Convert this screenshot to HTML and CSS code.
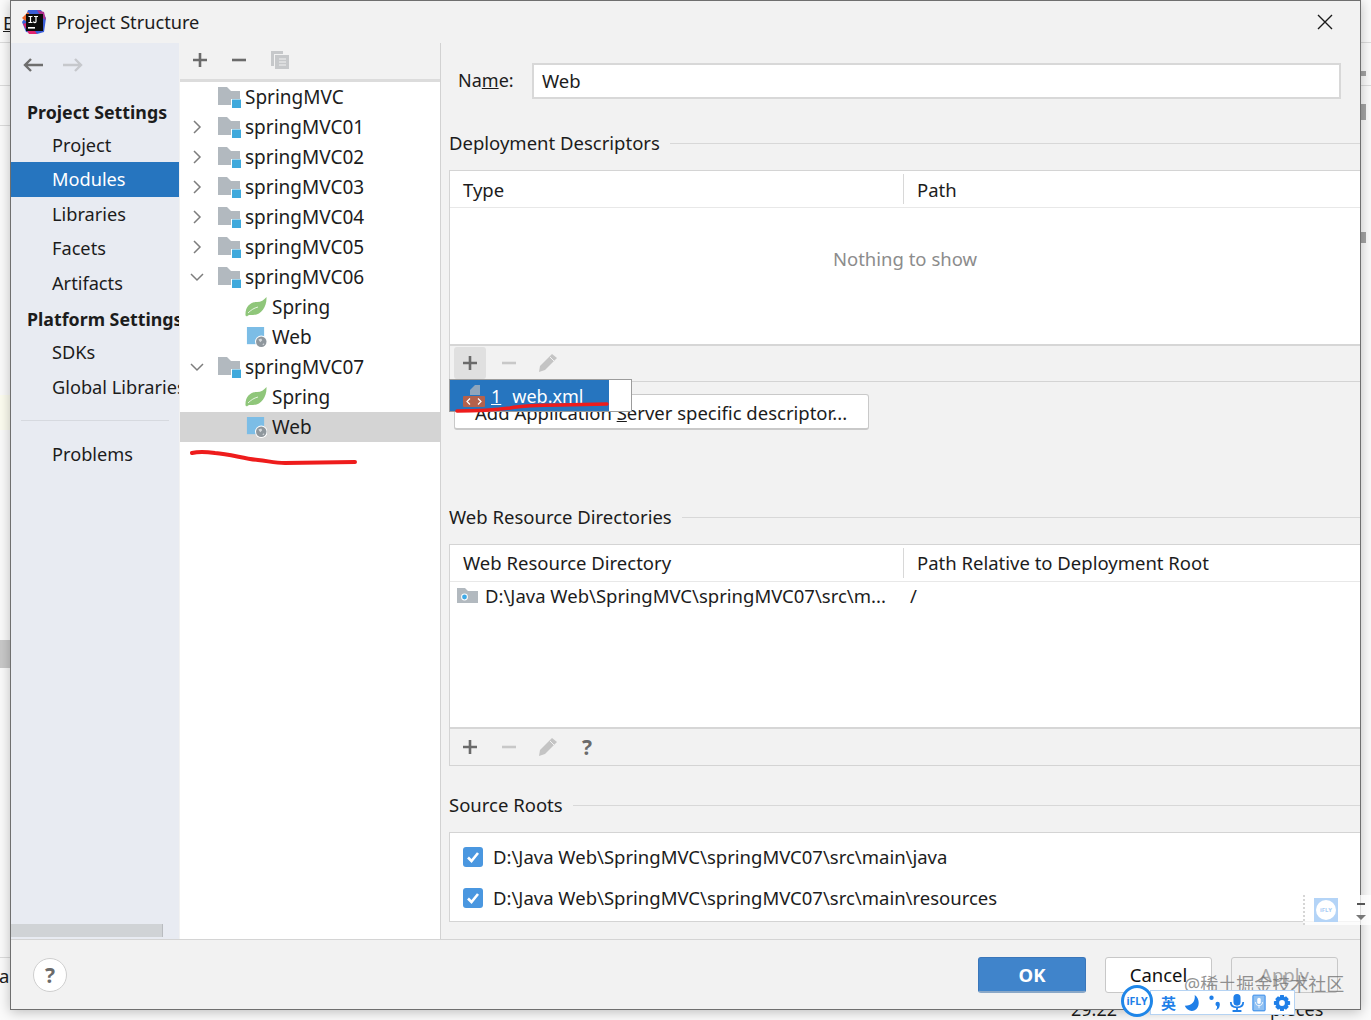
FILE: index.html
```html
<!DOCTYPE html>
<html lang="zh-CN">
<head>
  <meta charset="UTF-8">
  <title>Project Structure</title>
  <link rel="stylesheet" href="styles.css">
</head>
<body>
<svg class="defs" width="0" height="0">
  <symbol id="i-module" viewBox="0 0 24 21">
    <path d="M0 0h9l4 4h9v14H0z" fill="#b2b9bf"/>
    <rect x="13" y="12" width="10" height="9" fill="#fff"/>
    <rect x="14" y="12.5" width="9" height="8.5" fill="#3fa9dc"/>
  </symbol>
  <symbol id="i-spring" viewBox="0 0 22 20">
    <path d="M21.500 0C22 10 16 18 8 18 5 18 3.500 17.500 2 19.500L0.500 18.500C0 10 5 5 12 5 16 5 19 3 21.500 0z" fill="#8fc67a"/>
    <path d="M3 16C6 13 9 11 13 10" fill="none" stroke="#fff" stroke-width="0.800"/>
  </symbol>
  <symbol id="i-web" viewBox="0 0 23 22">
    <rect x="2" y="0" width="18" height="18" fill="#7cbde6"/>
    <circle cx="17" cy="15.500" r="6.500" fill="#fff"/>
    <circle cx="17" cy="15.500" r="5.500" fill="#8f979d"/>
    <path d="M14 13l3-1 1 2-2 2zM18 18l2-1v2z" fill="#d5d9dc"/>
  </symbol>
  <symbol id="i-plus" viewBox="0 0 16 16">
    <path d="M8 1v14M1 8h14" fill="none" stroke="currentColor" stroke-width="2.6"/>
  </symbol>
  <symbol id="i-minus" viewBox="0 0 16 16">
    <path d="M1 8h14" fill="none" stroke="currentColor" stroke-width="2.6"/>
  </symbol>
  <symbol id="i-pencil" viewBox="0 0 20 20">
    <path d="M14 1l5 4L7 17l-6 2 1-6z" fill="#c4c4c4"/>
    <path d="M12 4l4 4" stroke="#f2f2f2" stroke-width="1"/>
  </symbol>
  <symbol id="i-check" viewBox="0 0 20 20">
    <rect width="20" height="20" rx="3" fill="#4a97e0"/>
    <path d="M5 10.5l3.5 3.5L15 6" fill="none" stroke="#fff" stroke-width="2.6"/>
  </symbol>
  <symbol id="i-right" viewBox="0 0 10 14">
    <path d="M2 1l6 6-6 6" fill="none" stroke="#7d7d7d" stroke-width="1.5"/>
  </symbol>
  <symbol id="i-down" viewBox="0 0 14 10">
    <path d="M1 2l6 6 6-6" fill="none" stroke="#7d7d7d" stroke-width="1.5"/>
  </symbol>
</svg>

<div class="desktop">
  <div class="behind-e">E</div>
  <div class="behind-a">a</div>
  <div class="behind-block"></div>
  <div class="behind-yellow"></div>
  <div class="behind-line l1"></div>
  <div class="behind-line l2"></div>
  <div class="behind-line l3"></div>
  <div class="behind-line l4"></div>
  <div class="behind-mark m1"></div>
  <div class="behind-mark m2"></div>
  <div class="behind-mark m3"></div>
  <div class="behind-bottom b1">29.22</div>
  <div class="behind-bottom b2">pieces</div>

  <div class="dialog">
    <div class="titlebar">
      <svg class="app-logo" width="26" height="26" viewBox="0 0 26 26">
        <path d="M7 1l13 0 5 8-2 14-7 2-11-2-4-10 3-4z" fill="#3b5fd9"/>
        <path d="M1 9l6-6 4 6-4 5z" fill="#f0682a"/>
        <path d="M2 15l6 10 8 0-8-12z" fill="#e0246f"/>
        <path d="M16 1l7 2 2 8-5-3z" fill="#b0328f"/>
        <rect x="5" y="5" width="17" height="17" fill="#0c0c0c"/>
        <rect x="7" y="18" width="7" height="1.6" fill="#fff"/>
        <path d="M7.5 7.5h4M9.5 7.5v6M7.5 13.5h4M13 7.5h4M15 7.5v5c0 1.5-2 1.5-2.600 0" fill="none" stroke="#fff" stroke-width="1.200"/>
      </svg>
      <span class="title">Project Structure</span>
      <svg class="close" width="16" height="16" viewBox="0 0 16 16">
        <path d="M1 1l14 14M15 1L1 15" stroke="#1a1a1a" stroke-width="1.400"/>
      </svg>
    </div>

    <div class="main">
      <aside class="sidebar">
        <div class="nav-arrows">
          <svg width="22" height="16" viewBox="0 0 22 16"><path d="M21 8H3M9 2L3 8l6 6" fill="none" stroke="#6e6e6e" stroke-width="2.400"/></svg>
          <svg width="22" height="16" viewBox="0 0 22 16"><path d="M1 8h18M13 2l6 6-6 6" fill="none" stroke="#c6c8cc" stroke-width="2.400"/></svg>
        </div>
        <div class="nav-head">Project Settings</div>
        <div class="nav-item">Project</div>
        <div class="nav-item active">Modules</div>
        <div class="nav-item">Libraries</div>
        <div class="nav-item">Facets</div>
        <div class="nav-item">Artifacts</div>
        <div class="nav-head second">Platform Settings</div>
        <div class="nav-item">SDKs</div>
        <div class="nav-item">Global Libraries</div>
        <div class="nav-sep"></div>
        <div class="nav-item">Problems</div>
        <div class="side-scroll"></div>
      </aside>

      <section class="tree-panel">
        <div class="tree-tools">
          <svg class="ic-dark" width="16" height="16"><use href="#i-plus"/></svg>
          <svg class="ic-dark" width="16" height="16"><use href="#i-minus"/></svg>
          <svg width="20" height="20" viewBox="0 0 20 20"><path d="M1 1h12v3H4v12H1z" fill="#c6c8ca"/><path d="M5 5h14v14H5z" fill="#c6c8ca"/><path d="M9 9h7M9 12h7M9 15h7" stroke="#f2f2f2" stroke-width="1.200"/></svg>
        </div>
        <div class="tree">
          <div class="tree-row"><span class="arrow"></span><svg class="mod" width="24" height="21"><use href="#i-module"/></svg>SpringMVC</div>
          <div class="tree-row"><span class="arrow"><svg width="10" height="14"><use href="#i-right"/></svg></span><svg class="mod" width="24" height="21"><use href="#i-module"/></svg>springMVC01</div>
          <div class="tree-row"><span class="arrow"><svg width="10" height="14"><use href="#i-right"/></svg></span><svg class="mod" width="24" height="21"><use href="#i-module"/></svg>springMVC02</div>
          <div class="tree-row"><span class="arrow"><svg width="10" height="14"><use href="#i-right"/></svg></span><svg class="mod" width="24" height="21"><use href="#i-module"/></svg>springMVC03</div>
          <div class="tree-row"><span class="arrow"><svg width="10" height="14"><use href="#i-right"/></svg></span><svg class="mod" width="24" height="21"><use href="#i-module"/></svg>springMVC04</div>
          <div class="tree-row"><span class="arrow"><svg width="10" height="14"><use href="#i-right"/></svg></span><svg class="mod" width="24" height="21"><use href="#i-module"/></svg>springMVC05</div>
          <div class="tree-row"><span class="arrow"><svg width="14" height="10"><use href="#i-down"/></svg></span><svg class="mod" width="24" height="21"><use href="#i-module"/></svg>springMVC06</div>
          <div class="tree-row child"><svg class="leaf" width="22" height="20"><use href="#i-spring"/></svg>Spring</div>
          <div class="tree-row child"><svg class="leaf" width="22" height="21"><use href="#i-web"/></svg>Web</div>
          <div class="tree-row"><span class="arrow"><svg width="14" height="10"><use href="#i-down"/></svg></span><svg class="mod" width="24" height="21"><use href="#i-module"/></svg>springMVC07</div>
          <div class="tree-row child"><svg class="leaf" width="22" height="20"><use href="#i-spring"/></svg>Spring</div>
          <div class="tree-row child selected"><svg class="leaf" width="22" height="21"><use href="#i-web"/></svg>Web</div>
        </div>
      </section>

      <section class="content">
        <div class="name-row">
          <label>Na<u>m</u>e:</label>
          <div class="name-input">Web</div>
        </div>

        <div class="group-head first"><span>Deployment Descriptors</span></div>
        <div class="table">
          <div class="thead">
            <div class="th col-a">Type</div>
            <div class="th">Path</div>
          </div>
          <div class="tbody empty">Nothing to show</div>
          <div class="table-tools">
            <span class="tool hover"><svg class="ic-dark" width="16" height="16"><use href="#i-plus"/></svg></span>
            <span class="tool"><svg class="ic-light" width="16" height="16"><use href="#i-minus"/></svg></span>
            <span class="tool"><svg width="20" height="20"><use href="#i-pencil"/></svg></span>
          </div>
        </div>
        <button class="add-btn">Add Application <u>S</u>erver specific descriptor...</button>

        <div class="group-head second"><span>Web Resource Directories</span></div>
        <div class="table">
          <div class="thead short">
            <div class="th col-a">Web Resource Directory</div>
            <div class="th">Path Relative to Deployment Root</div>
          </div>
          <div class="tbody dirs">
            <div class="dir-row">
              <div class="cell col-a">
                <svg width="21" height="15" viewBox="0 0 21 15"><path d="M0 0h8l3 3h10v12H0z" fill="#b2b9bf"/><circle cx="7.500" cy="9" r="3.400" fill="#fff"/><circle cx="7.500" cy="9" r="2.400" fill="#3fa9e6"/></svg>
                <span>D:\Java Web\SpringMVC\springMVC07\src\m...</span>
              </div>
              <div class="cell slash">/</div>
            </div>
          </div>
          <div class="table-tools tall">
            <span class="tool"><svg class="ic-dark" width="16" height="16"><use href="#i-plus"/></svg></span>
            <span class="tool"><svg class="ic-light" width="16" height="16"><use href="#i-minus"/></svg></span>
            <span class="tool"><svg width="20" height="20"><use href="#i-pencil"/></svg></span>
            <span class="tool qmark">?</span>
          </div>
        </div>

        <div class="group-head third"><span>Source Roots</span></div>
        <div class="roots">
          <div class="root-row"><svg width="20" height="20"><use href="#i-check"/></svg>D:\Java Web\SpringMVC\springMVC07\src\main\java</div>
          <div class="root-row"><svg width="20" height="20"><use href="#i-check"/></svg>D:\Java Web\SpringMVC\springMVC07\src\main\resources</div>
        </div>
      </section>
    </div>

    <div class="footer">
      <div class="help">?</div>
      <div class="footer-btns">
        <button class="btn ok">OK</button>
        <button class="btn">Cancel</button>
        <button class="btn off">Apply</button>
      </div>
    </div>
  </div>

  <!-- popup over the add button -->
  <div class="popup">
    <div class="popup-sel">
      <svg width="22" height="22" viewBox="0 0 22 22">
        <path d="M7 5l5-5h5v10H7z" fill="#8fa6bd"/>
        <rect x="0" y="11" width="22" height="11" rx="1" fill="#b4614c"/>
        <path d="M7 13.500l-3 3 3 3M15 13.500l3 3-3 3" fill="none" stroke="#fff" stroke-width="1.200"/>
      </svg>
      <u>1</u><span>web.xml</span>
    </div>
  </div>

  <!-- hand drawn red marks -->
  <svg class="marks" width="1371" height="1020" viewBox="0 0 1371 1020">
    <path d="M192 453C200 451 208 452 215 453 230 454 245 459 258 460 268 461 275 463 285 463L355 462" fill="none" stroke="#ee1c1c" stroke-width="4" stroke-linecap="round"/>
    <path d="M457 411C475 411 495 410 510 408 525 405 540 405 560 405L607 404" fill="none" stroke="#ee1c1c" stroke-width="3.500" stroke-linecap="round"/>
  </svg>

  <!-- ime floating logo and toolbar -->
  <div class="fly-panel">
    <div class="fly-small"><span>iFLY</span></div>
    <svg class="fly-arrows" width="12" height="20" viewBox="0 0 12 20"><path d="M2 3h8" stroke="#555" stroke-width="2"/><path d="M1 14h10l-5 5z" fill="#777"/></svg>
  </div>

  <div class="watermark">@稀土掘金技术社区</div>
  <div class="ime">
    <div class="ime-logo">iFLY</div>
    <span class="ime-txt">英</span>
    <svg width="18" height="18" viewBox="0 0 20 20"><path d="M13 1C14 8 10 13 2 13 4 18 9 20 13 18 19 15 19 5 13 1z" fill="#1f7fe8"/></svg>
    <svg width="14" height="18" viewBox="0 0 16 20"><circle cx="4" cy="4" r="2.500" fill="#1f7fe8"/><circle cx="11" cy="11" r="2.500" fill="#1f7fe8"/><path d="M13 11c1 4-1 6-4 7 1-2 2-3 1-5z" fill="#1f7fe8"/></svg>
    <svg width="16" height="18" viewBox="0 0 18 20"><rect x="5" y="0" width="8" height="13" rx="4" fill="#1f7fe8"/><path d="M2 9c0 4 3 6 7 6s7-2 7-6" fill="none" stroke="#1f7fe8" stroke-width="2"/><path d="M9 15v3M4 19h10" stroke="#1f7fe8" stroke-width="2"/></svg>
    <svg width="14" height="18" viewBox="0 0 16 20"><rect x="1" y="1" width="14" height="18" rx="1" fill="#8fc0f2" stroke="#1f7fe8" stroke-width="1"/><rect x="6" y="4" width="4" height="7" rx="2" fill="#fff"/><path d="M4 9c0 3 2 4 4 4s4-1 4-4M8 13v3" fill="none" stroke="#fff" stroke-width="1"/></svg>
    <svg width="18" height="18" viewBox="0 0 20 20"><path d="M8 1h4l.5 2.500 2-1 3 3-1.200 2L19 8v4l-2.700.5 1.200 2-3 3-2-1.200L12 19H8l-.5-2.700-2 1.200-3-3 1.200-2L1 12V8l2.700-.5-1.200-2 3-3 2 1.200z" fill="#1f7fe8"/><circle cx="10" cy="10" r="3.200" fill="#fff"/></svg>
  </div>
</div>
</body>
</html>
```

FILE: styles.css
```css
* {
  box-sizing: border-box;
  margin: 0;
  padding: 0;
}

body {
  background: #fff;
  font-family: "Noto Sans", "Noto Sans CJK SC", sans-serif;
  font-size: 18.5px;
  color: #1c1c1c;
}

.defs {
  position: absolute;
}

.desktop {
  position: relative;
  width: 1371px;
  height: 1020px;
  overflow: hidden;
  background: #fbfbfb;
}

/* things of the window behind the dialog */
.behind-e,
.behind-a {
  position: absolute;
  left: 3px;
  top: 10px;
  text-decoration: underline;
}
.behind-a {
  left: -1px;
  top: 963px;
  text-decoration: none;
}
.behind-block {
  position: absolute;
  left: 0;
  top: 640px;
  width: 10px;
  height: 28px;
  background: #c9c9c9;
}
.behind-yellow {
  position: absolute;
  left: 0;
  top: 395px;
  width: 10px;
  height: 35px;
  background: #fdfdf0;
}
.behind-line {
  position: absolute;
  left: 0;
  height: 1px;
  width: 1371px;
  background: #dcdcdc;
}
.l1 { top: 42px; }
.l2 { top: 85px; }
.l3 { top: 125px; width: 10px; }
.l4 { top: 957px; width: 10px; }
.behind-mark {
  position: absolute;
  left: 1361px;
  width: 5px;
  background: #a4a4a4;
}
.m1 { top: 71px; height: 5px; }
.m2 { top: 104px; height: 16px; }
.m3 { top: 232px; height: 11px; }
.behind-bottom {
  position: absolute;
  top: 997px;
  font-size: 18px;
}
.b1 { left: 1071px; }
.b2 { left: 1270px; }

.dialog {
  position: relative;
  display: flex;
  flex-direction: column;
  margin-left: 10px;
  width: 1351px;
  height: 1010px;
  background: #f2f2f2;
  border: 1px solid #6f6f6f;
  box-shadow: 0 2px 12px rgba(0, 0, 0, 0.25);
  overflow: hidden;
}

.titlebar {
  flex: none;
  display: flex;
  align-items: center;
  height: 42px;
  padding-left: 10px;
}
.app-logo {
  margin-right: 9px;
}
.title {
  font-size: 18.2px;
}
.close {
  margin-left: auto;
  margin-right: 27px;
}

.main {
  flex: 1;
  display: flex;
  min-height: 0;
}

.sidebar {
  position: relative;
  flex: none;
  width: 168px;
  background: #e8ebf2;
  white-space: nowrap;
  overflow: hidden;
  font-size: 18.2px;
}
.nav-arrows {
  display: flex;
  gap: 18px;
  height: 51.500px;
  padding: 14px 0 0 11px;
}
.nav-head {
  padding-left: 16px;
  height: 33px;
  line-height: 34px;
  font-size: 17.8px;
  font-weight: 700;
}
.nav-head.second {
  margin-top: 2px;
}
.nav-item {
  padding-left: 41px;
  height: 34.500px;
  line-height: 34.500px;
}
.nav-item.active {
  background: #2675bf;
  color: #fff;
}
.nav-sep {
  height: 1px;
  margin: 16px 10px;
  background: #d6d9df;
}
.side-scroll {
  position: absolute;
  left: 0;
  bottom: 2px;
  width: 152px;
  height: 13px;
  background: #d0d3d6;
  border-right: 1px solid #b9bcc0;
}

.tree-panel {
  flex: none;
  width: 261px;
  margin-left: 1px;
  background: #fff;
  border-right: 1px solid #d2d2d2;
  font-size: 19px;
}
.tree-tools {
  display: flex;
  align-items: center;
  gap: 23px;
  height: 39px;
  padding: 0 0 2px 12px;
  background: #f2f2f2;
  border-bottom: 3px solid #dcdcdc;
}
.ic-dark { color: #6b6b6b; }
.ic-light { color: #c8c8c8; }
.tree-row {
  display: flex;
  align-items: center;
  height: 30px;
  white-space: nowrap;
}
.arrow {
  flex: none;
  display: flex;
  justify-content: center;
  width: 34px;
  margin-right: 4px;
}
.mod {
  margin-right: 3px;
}
.tree-row.child {
  padding-left: 65px;
}
.leaf {
  margin-right: 5px;
}
.tree-row.selected {
  background: #d4d4d4;
}

.content {
  flex: 1;
  min-width: 0;
  padding-left: 8px;
}
.name-row {
  display: flex;
  align-items: center;
  gap: 18px;
  padding: 20px 0 0 9px;
}
.name-row label {
  flex: none;
  width: 56px;
  margin-bottom: 2px;
  font-size: 18px;
  white-space: nowrap;
}
.name-input {
  width: 809px;
  height: 36px;
  line-height: 31px;
  padding-left: 8px;
  background: #fff;
  border: 2px solid #d8d8d8;
}

.group-head {
  display: flex;
  align-items: center;
  gap: 10px;
  height: 24px;
  white-space: nowrap;
}
.group-head span {
  margin-bottom: 2px;
}
.group-head::after {
  content: "";
  flex: 1;
  height: 1px;
  background: #d8d8d8;
}
.group-head.first {
  margin: 32px 0 15px;
}
.group-head.second {
  margin: 75px 0 15px;
}
.group-head.third {
  margin: 27px 0 15px;
}

.table {
  border: 1px solid #d4d4d4;
  border-right: 0;
}
.thead {
  display: flex;
  height: 37px;
  background: #fff;
  border-bottom: 1px solid #e8e8e8;
}
.th {
  padding-left: 13px;
  line-height: 38px;
}
.col-a {
  flex: none;
  width: 454px;
  border-right: 1px solid #d8d8d8;
}
.thead .col-a {
  margin: 3px 0 3px;
  line-height: 32px;
}
.thead.short .th {
  line-height: 36px;
}
.thead.short .col-a {
  line-height: 30px;
}
.tbody {
  background: #fff;
}
.tbody.empty {
  display: flex;
  justify-content: center;
  padding-top: 38px;
  height: 136px;
  color: #8c8c8c;
}
.tbody.dirs {
  height: 145px;
}
.dir-row {
  display: flex;
  height: 26px;
  align-items: center;
}
.cell.col-a {
  display: flex;
  align-items: center;
  gap: 7px;
  padding-left: 7px;
  border-right: 0;
  white-space: nowrap;
}
.slash {
  padding-left: 6px;
}
.table-tools {
  display: flex;
  align-items: center;
  gap: 7px;
  height: 37px;
  padding: 0 0 2px 4px;
  border-top: 2px solid #d6d6d6;
}
.table-tools.tall {
  height: 38px;
  padding-bottom: 0;
}
.tool {
  display: flex;
  align-items: center;
  justify-content: center;
  width: 32px;
  height: 32px;
  border-radius: 3px;
}
.tool.hover {
  background: #e0e0e0;
}
.qmark {
  font-size: 21px;
  font-weight: 700;
  color: #6b6b6b;
}

.add-btn {
  display: block;
  margin: 12px 0 0 5px;
  width: 415px;
  height: 36px;
  padding: 1px 0 0 20px;
  text-align: left;
  font: inherit;
  color: inherit;
  background: #fff;
  border: 1px solid #c9c9c9;
  border-bottom: 2px solid #c9c9c9;
  border-radius: 3px;
}

.roots {
  height: 90px;
  padding-top: 3px;
  background: #fff;
  border: 1px solid #d4d4d4;
  border-right: 0;
}
.root-row {
  display: flex;
  align-items: center;
  gap: 10px;
  height: 41px;
  padding-left: 13px;
  white-space: nowrap;
}

.footer {
  flex: none;
  display: flex;
  align-items: center;
  justify-content: space-between;
  height: 70px;
  padding: 0 22px 0 22px;
  border-top: 1px solid #d4d4d4;
}
.help {
  width: 34px;
  height: 34px;
  line-height: 32px;
  text-align: center;
  font-size: 21px;
  font-weight: 700;
  color: #6b6b6b;
  background: #fff;
  border: 1px solid #cfcfcf;
  border-radius: 50%;
}
.footer-btns {
  display: flex;
  gap: 19px;
}
.btn {
  width: 107px;
  height: 36px;
  font: inherit;
  color: #111;
  background: #fff;
  border: 1px solid #c8c8c8;
  border-radius: 3px;
}
.btn.ok {
  width: 108px;
  color: #fff;
  font-weight: 700;
  background: #4084cb;
  border-color: #3a76ba;
  border-bottom: 2px solid #8aa8c8;
}
.btn.off {
  color: #a8a8a8;
  background: #f2f2f2;
}

.popup {
  position: absolute;
  left: 449px;
  top: 379px;
  width: 183px;
  height: 33px;
  background: #fff;
  border: 1px solid #9c9c9c;
  font-size: 18px;
}
.popup-sel {
  display: flex;
  align-items: center;
  width: 159px;
  height: 31px;
  padding-left: 13px;
  color: #fff;
  background: #2675bf;
}
.popup-sel svg {
  margin-right: 6px;
}
.popup-sel span {
  margin-left: 11px;
}

.marks {
  position: absolute;
  left: 0;
  top: 0;
  pointer-events: none;
}

.fly-panel {
  position: absolute;
  left: 1303px;
  top: 895px;
  width: 68px;
  height: 30px;
  background: rgba(255, 255, 255, 0.75);
  border-left: 2px dotted #d6d6d6;
}
.fly-small {
  position: absolute;
  left: 9px;
  top: 3px;
  display: flex;
  align-items: center;
  justify-content: center;
  width: 24px;
  height: 24px;
  background: #b4d4f7;
}
.fly-small span {
  width: 20px;
  height: 20px;
  line-height: 20px;
  text-align: center;
  font-size: 6px;
  font-weight: 700;
  color: #a9cdf5;
  background: #fff;
  border-radius: 50%;
}
.fly-arrows {
  position: absolute;
  left: 50px;
  top: 6px;
}

.watermark {
  position: absolute;
  left: 1184px;
  top: 970px;
  font-size: 18px;
  color: rgba(110, 110, 110, 0.75);
  white-space: nowrap;
}

.ime {
  position: absolute;
  left: 1150px;
  top: 990px;
  display: flex;
  align-items: center;
  gap: 7px;
  width: 145px;
  height: 25px;
  padding-left: 10px;
  background: #fff;
  border: 1px solid #b5d3f3;
}
.ime-logo {
  position: absolute;
  left: -30px;
  top: -6px;
  width: 32px;
  height: 32px;
  line-height: 26px;
  text-align: center;
  font-size: 10.500px;
  font-weight: 700;
  color: #1f7fe8;
  background: #fff;
  border: 3px solid #1f86e8;
  border-radius: 50%;
}
.ime-txt {
  font-size: 15px;
  font-weight: 700;
  color: #1f7fe8;
}
```
